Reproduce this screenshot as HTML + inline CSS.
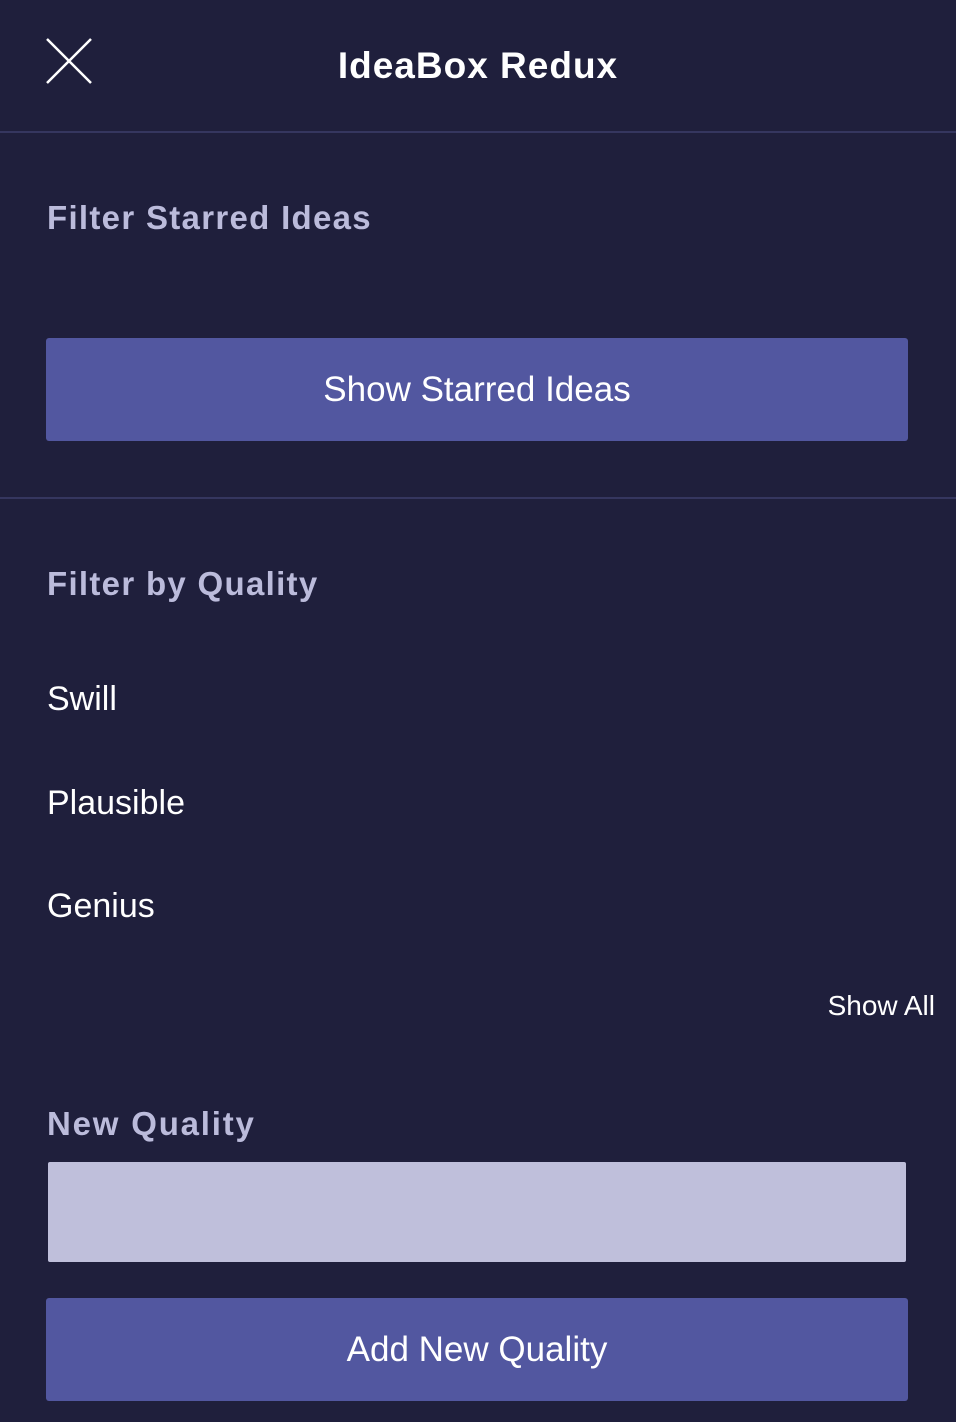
<!DOCTYPE html>
<html><head><meta charset="utf-8"><style>
*{margin:0;padding:0;box-sizing:border-box}
html,body{width:956px;height:1422px;background:#1f1f3c;font-family:"Liberation Sans",sans-serif;overflow:hidden}
.a{position:absolute}
.hr{position:absolute;left:0;width:956px;height:2px;background:#35365f}
.lbl{position:absolute;left:47px;color:#bbbbdb;font-weight:bold;font-size:33px;line-height:40px;letter-spacing:1.3px}
.btn{position:absolute;left:46px;width:862px;height:103px;background:#5257a0;border-radius:3px;color:#fff;font-size:35px;display:flex;align-items:center;justify-content:center}
.it{position:absolute;left:47px;color:#fff;font-size:34px;line-height:40px}
</style></head><body>
<svg class="a" style="left:45px;top:37px" width="48" height="48"><path d="M2 2L46 46M46 2L2 46" stroke="#fff" stroke-width="2.5"/></svg>
<div class="a" style="left:0;width:956px;top:44px;text-align:center;color:#fff;font-weight:bold;font-size:37px;line-height:44px;letter-spacing:1px">IdeaBox Redux</div>
<div class="hr" style="top:131px"></div>
<div class="lbl" style="top:198px">Filter Starred Ideas</div>
<div class="btn" style="top:338px">Show Starred Ideas</div>
<div class="hr" style="top:497px"></div>
<div class="lbl" style="top:564px">Filter by Quality</div>
<div class="it" style="top:679px">Swill</div>
<div class="it" style="top:783px">Plausible</div>
<div class="it" style="top:886px">Genius</div>
<div class="a" style="right:21px;top:988px;color:#fff;font-size:28px;line-height:36px">Show All</div>
<div class="lbl" style="top:1104px;letter-spacing:1.8px">New Quality</div>
<div class="a" style="left:48px;top:1162px;width:858px;height:100px;background:#bfbfdb;border-radius:2px"></div>
<div class="btn" style="top:1298px">Add New Quality</div>
</body></html>
